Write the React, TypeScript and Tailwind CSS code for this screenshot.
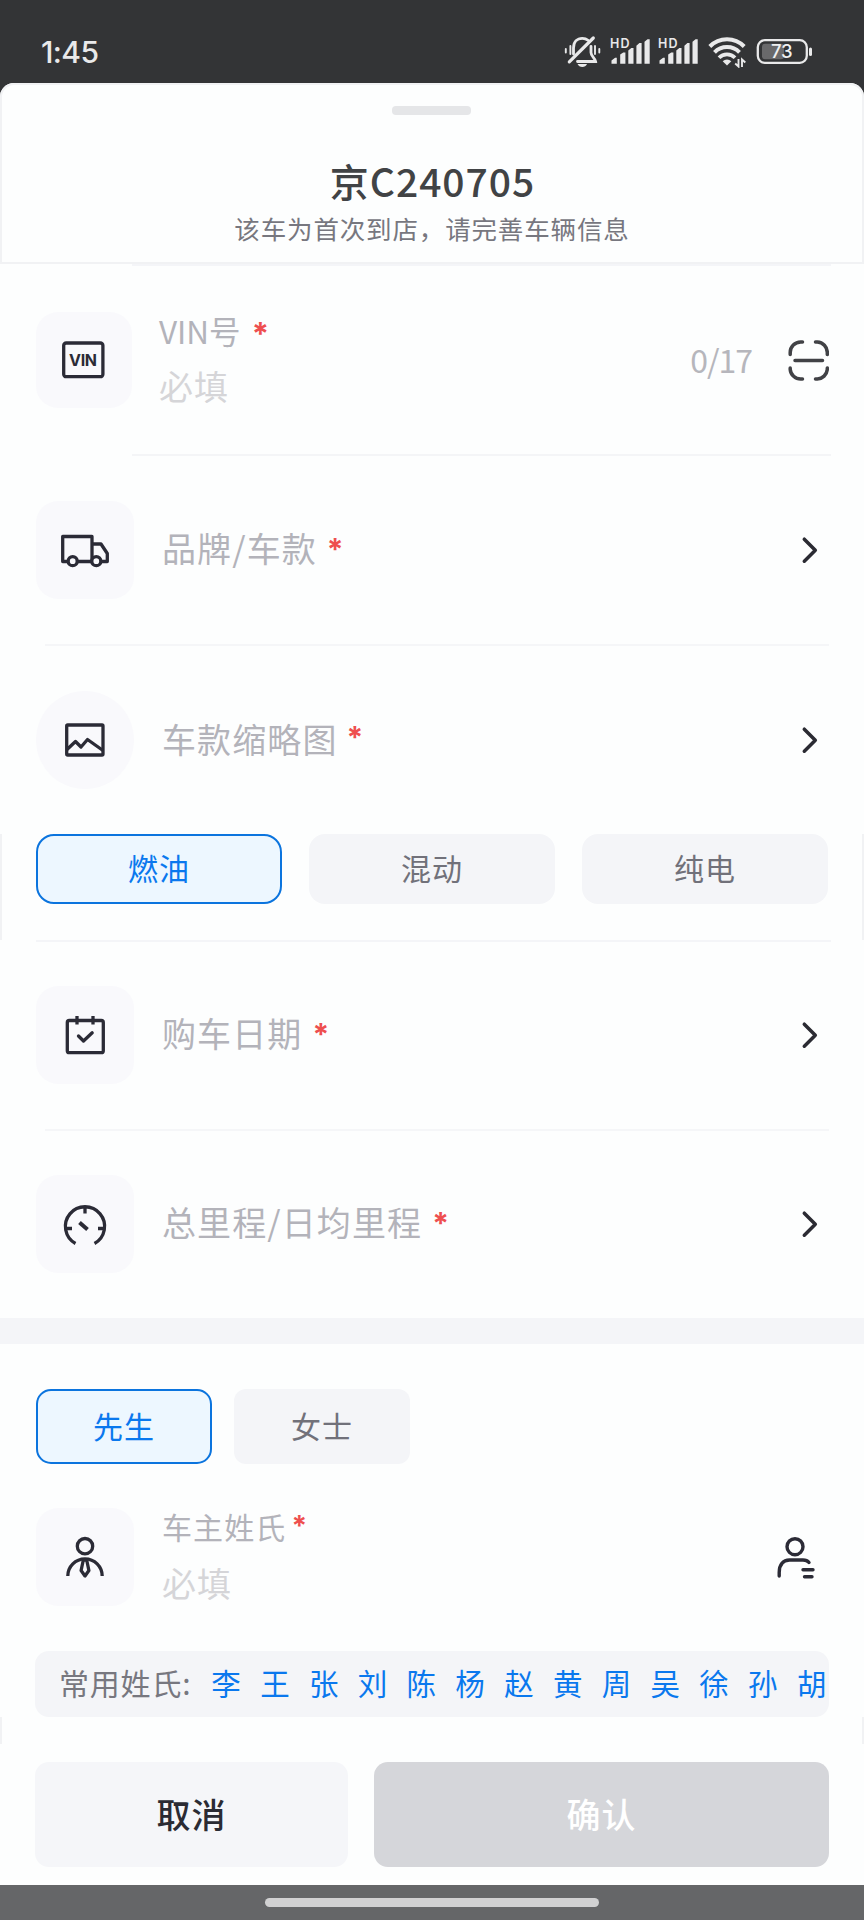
import type { ReactNode } from 'react'
import clsx from 'clsx'

const surnames = ['李', '王', '张', '刘', '陈', '杨', '赵', '黄', '周', '吴', '徐', '孙', '胡']

function Signal() {
  return (
    <svg width="48" height="36" viewBox="0 0 48 36" fill="#e9e9ea">
      <text x="0" y="16.2" fontSize="12.5" fontWeight="600" fontFamily="Inter, sans-serif" textLength="19.5">
        HD
      </text>
      <path d="M1.5 31.7v-3.2l3.6-2.8h1.7v6zM10.2 31.7v-9.2l3-1.9h2.2v11.1zM18.3 31.7V18.4l3-2.5h2.2v15.8zM26.4 31.7V13.7l3-2.6h2.2v20.6zM34.5 31.7V9.7l3-2.5h2.2v24.5z" />
    </svg>
  )
}

function StatusBar() {
  return (
    <div className="flex h-[83px] items-center justify-between pl-[41px] pr-[50px]">
      <span className="pt-[20px] font-[Inter] text-[30px] leading-[36px] font-medium tracking-[-0.6px] text-[#e9e9ea]">
        1:45
      </span>
      <div className="flex items-start pt-[16px]">
        <svg width="46" height="36" viewBox="0 0 46 36" fill="none" stroke="#e9e9ea" strokeWidth="2.8" strokeLinecap="round">
          <path d="M5.3 29.8 29.3 6" strokeWidth="3.2" />
          <path d="M9.5 22v-6C9.5 9.8 13.3 6.3 18.3 6.3c2.4 0 4.2.7 5.7 2M27 14.5v6c0 4 4 5.2 4.6 9H13.5" />
          <path d="M13.5 32h9.6c-1 2-2.6 3-4.8 3s-3.800-1-4.800-3z" fill="#e9e9ea" stroke="none" />
          <path d="M1.8 17v3.5M6.4 14v8M31 14v8M35.3 17v3.5" strokeWidth="1.9" />
        </svg>
        <Signal />
        <Signal />
        <svg width="50" height="36" viewBox="-2 0 50 36" fill="none" stroke="#e9e9ea" strokeWidth="4">
          <path d="M1.8 14.500a24 24 0 0 1 34.400 0" />
          <path d="M6.500 20.300a17.500 17.500 0 0 1 25 0" />
          <path d="M11 25.800a11 11 0 0 1 16 0" strokeWidth="3.7" />
          <path d="M14.700 29.300a6 6 0 0 1 8.600 0l-4.300 4.200z" fill="#e9e9ea" stroke="none" />
          <path d="M30.500 27v7.500l-3.300-3M34 35v-7.500l3.300 3" strokeWidth="1.9" />
        </svg>
        <svg width="58" height="36" viewBox="0 0 58 36">
          <rect x="1.800" y="8.200" width="49" height="22.600" rx="7" fill="none" stroke="#e9e9ea" strokeWidth="2.3" />
          <rect x="6" y="11.700" width="22" height="15.500" rx="3" fill="#69696b" />
          <rect x="53" y="15.500" width="3" height="8.500" rx="1.500" fill="#e9e9ea" />
          <text x="15" y="26.300" fontSize="18.5" fontWeight="500" fontFamily="Inter, sans-serif" textLength="21.5" fill="#f0f0f0">
            73
          </text>
        </svg>
      </div>
    </div>
  )
}

function Icon({ children }: { children: ReactNode }) {
  return (
    <svg width="48" height="48" viewBox="0 0 48 48" fill="none" stroke="#2b2b36" strokeWidth="3.3" strokeLinejoin="round">
      {children}
    </svg>
  )
}

function Tile({ children, className }: { children: ReactNode; className?: string }) {
  return (
    <div className={clsx('flex shrink-0 items-center justify-center bg-[#f9f9fc]', className ?? 'h-[98px] w-[98px] rounded-[22px]')}>
      {children}
    </div>
  )
}

function Star({ className }: { className?: string }) {
  return <span className={clsx('font-[Inter] font-bold text-[#ee4f4f]', className)}>*</span>
}

function Chevron() {
  return (
    <svg
      className="mr-[5px] ml-auto"
      width="28"
      height="28"
      viewBox="0 0 28 28"
      fill="none"
      stroke="#2b2b33"
      strokeWidth="3.5"
      strokeLinecap="round"
      strokeLinejoin="round"
    >
      <path d="M8.300 3.200 19.300 14.200 8.300 25.200" />
    </svg>
  )
}

function LinkRow({ icon, label, round }: { icon: ReactNode; label: string; round?: boolean }) {
  return (
    <div className="flex h-[188px] shrink-0 items-center pr-[35px] pl-[36px]">
      <Tile className={round ? 'h-[98px] w-[98px] rounded-full' : undefined}>{icon}</Tile>
      <div className="ml-[28px] flex pb-[3px] text-[34px] leading-[44px] tracking-[1.1px] text-[#b3b3ba]">
        {label}
        <Star className={clsx('text-[30px]', round ? '-mt-[2px] ml-[9px]' : 'mt-px ml-[10px]')} />
      </div>
      <Chevron />
    </div>
  )
}

function Pill({ label, active, className }: { label: string; active?: boolean; className: string }) {
  return (
    <button
      className={clsx(
        'flex items-center justify-center pb-[3px] text-[30px] tracking-[1px]',
        active ? 'border-2 border-[#0b74de] bg-[#edf7ff] text-[#0a78ee]' : 'bg-[#f4f5f8] text-[#71717a]',
        className
      )}
    >
      {label}
    </button>
  )
}

export default function App() {
  return (
    <div className="flex h-[1920px] w-[864px] flex-col overflow-hidden bg-[#333436] font-['Noto_Sans_CJK_SC',sans-serif]">
      <StatusBar />
      <main className="flex h-[1802px] flex-col rounded-t-[14px] bg-[#fdfefe]">
        <header className="flex h-[181px] shrink-0 flex-col items-center rounded-t-[14px] border-2 border-[#f1f2f4] pt-[21px]">
          <div className="mr-px h-[9px] w-[79px] rounded-[4px] bg-[#e5e6e8]" />
          <h1 className="mt-[41px] pl-px text-[39px] leading-[48px] font-medium tracking-[1px] text-[#414345]">京C240705</h1>
          <p className="mt-[8px] text-[25.5px] leading-[32px] tracking-[0.85px] text-[#77777f]">该车为首次到店，请完善车辆信息</p>
        </header>
        <div className="mr-[33px] ml-[132px] h-[2px] shrink-0 bg-[#f4f5f8]" />

        <div className="flex h-[188px] shrink-0 items-center pr-[35px] pl-[36px]">
          <Tile className="h-[96px] w-[96px] rounded-[22px]">
            <Icon>
              <rect x="3.7" y="7" width="39.2" height="33.7" rx="2.5" />
              <text x="9" y="30" fontSize="16" fontWeight="700" fontFamily="Inter, sans-serif" textLength="28" fill="#2b2b36" stroke="none">
                VIN
              </text>
            </Icon>
          </Tile>
          <div className="ml-[27px] flex flex-col pb-[4px]">
            <div className="flex h-[44px] text-[31.5px] leading-[44px] text-[#b3b3ba]">
              VIN号
              <Star className="mt-[4px] ml-[11px] text-[31px]" />
            </div>
            <div className="mt-[12px] text-[34px] leading-[44px] tracking-[1px] text-[#d5d5d8]">必填</div>
          </div>
          <span className="mr-[36px] ml-auto pb-[2px] text-[32px] tracking-[-1px] text-[#b6b6bc]">0/17</span>
          <svg width="41" height="41" viewBox="0 0 41 41" fill="none" stroke="#414246" strokeWidth="3.5" strokeLinecap="round">
            <path d="M2.2 14.5v-2a10.5 10.5 0 0 1 10.5-10.5h1.8M27.5 2h1.8a10.5 10.5 0 0 1 10 10.5v2M39.3 28v1.5a10.5 10.5 0 0 1-10 9.5h-1.8M14.5 39h-1.8A10.5 10.5 0 0 1 2.2 29.5V28M7 20.5h27.5" />
          </svg>
        </div>
        <div className="mr-[33px] ml-[132px] h-[2px] shrink-0 bg-[#f4f5f7]" />

        <LinkRow
          label="品牌/车款"
          icon={
            <Icon>
              <path d="M1.7 10.5H31V35.5H1.7zM31 18h9l6.3 9.5v8H31" />
              <circle cx="11.7" cy="35.2" r="4.5" fill="#f9f9fc" />
              <circle cx="35.3" cy="35.2" r="4.5" fill="#f9f9fc" />
            </Icon>
          }
        />
        <div className="mr-[35px] ml-[45px] h-[2px] shrink-0 bg-[#f5f6f8]" />
        <LinkRow
          round
          label="车款缩略图"
          icon={
            <Icon>
              <rect x="5.7" y="9" width="36.3" height="30" rx="1" />
              <path d="M6 33.5 14.5 25.5 20 31 26.5 23.5 42 34.5" />
            </Icon>
          }
        />
        <div className="flex h-[106px] shrink-0 items-start gap-[27px] border-x-2 border-[#f1f2f4] px-[34px]">
          <Pill active label="燃油" className="h-[70px] w-[246px] rounded-[18px]" />
          <Pill label="混动" className="h-[70px] w-[246px] rounded-[16px]" />
          <Pill label="纯电" className="h-[70px] w-[246px] rounded-[16px]" />
        </div>
        <div className="mr-[33px] -mb-px ml-[36px] h-[2px] shrink-0 bg-[#f4f5f8]" />

        <LinkRow
          label="购车日期"
          icon={
            <Icon>
              <rect x="6.3" y="9.5" width="36" height="32.2" rx="2" />
              <path d="M16 5v8.500M32 5v8.500" />
              <path d="M17.5 25l5 5 8.7-8.2" strokeLinecap="round" />
            </Icon>
          }
        />
        <div className="-mb-px mr-[35px] ml-[45px] h-[2px] shrink-0 bg-[#f5f6f8]" />
        <LinkRow
          label="总里程/日均里程"
          icon={
            <Icon>
              <path d="M14.5 43.5a19.600 19.600 0 1 1 19 0M24 7v6.500M5 28.500h6M37 28.500h6" />
              <path d="M18.5 22.5 26.5 29.5" strokeWidth="4" />
            </Icon>
          }
        />
        <div className="h-[26px] shrink-0 bg-[#f4f5f8]" />

        <div className="flex gap-[22px] pt-[45px] pl-[36px]">
          <Pill active label="先生" className="h-[75px] w-[176px] rounded-[15px]" />
          <Pill label="女士" className="h-[75px] w-[176px] rounded-[12px]" />
        </div>
        <div className="mt-[42px] flex h-[102px] items-center pr-[35px] pl-[36px]">
          <Tile>
            <Icon>
              <circle cx="24" cy="13.2" r="7.7" />
              <path d="M6.8 43a17.2 17.2 0 0 1 34.4 0" />
              <path d="M22.3 27h3.4l2.2 10.5-3.9 5.5-3.9-5.5z" />
            </Icon>
          </Tile>
          <div className="ml-[28px] flex flex-col pb-[5px]">
            <div className="flex h-[44px] text-[30px] leading-[44px] tracking-[1.1px] text-[#b3b3ba]">
              车主姓氏
              <Star className="ml-[5px] text-[28px]" />
            </div>
            <div className="mt-[13px] text-[34px] leading-[44px] tracking-[1px] text-[#d5d5d8]">必填</div>
          </div>
          <svg
            className="mr-[10px] ml-auto"
            width="48"
            height="48"
            viewBox="0 0 48 48"
            fill="none"
            stroke="#2b2b36"
            strokeWidth="3.4"
            strokeLinecap="round"
          >
            <circle cx="24" cy="13.7" r="8" />
            <path d="M8.2 43v-3.5C8.2 32 12 27 18.5 27H32q4 0 6 2.5M32 36.7h10M33.5 43.7h7.5" />
          </svg>
        </div>

        <div className="mx-[35px] mt-[43px] flex h-[66px] shrink-0 items-center overflow-hidden rounded-[14px] bg-[#f4f5f8] pb-[4px] pl-[24px] text-[30px] tracking-[0.8px] whitespace-nowrap text-[#77777f]">
          常用姓氏:
          <div className="ml-[20px] flex text-[29.5px] tracking-normal text-[#0a78ee]">
            {surnames.map((name) => (
              <span key={name} className="w-[48.8px] shrink-0">
                {name}
              </span>
            ))}
          </div>
        </div>
        <div className="h-[27px] shrink-0 border-x-2 border-[#f1f2f4]" />
        <div className="mt-[18px] flex gap-[26px] px-[35px]">
          <button className="h-[105px] w-[313px] rounded-[14px] bg-[#f5f6f9] pb-[3px] text-[34px] font-medium tracking-[1px] text-[#2b2b33]">
            取消
          </button>
          <button className="h-[105px] flex-1 rounded-[14px] bg-[#d5d6da] pb-[3px] text-[34px] font-medium tracking-[1px] text-white">
            确认
          </button>
        </div>
      </main>
      <footer className="flex h-[35px] justify-center bg-[#656668] pt-[13px]">
        <div className="h-[9px] w-[334px] rounded-full bg-[#d1d1d2]" />
      </footer>
    </div>
  )
}
